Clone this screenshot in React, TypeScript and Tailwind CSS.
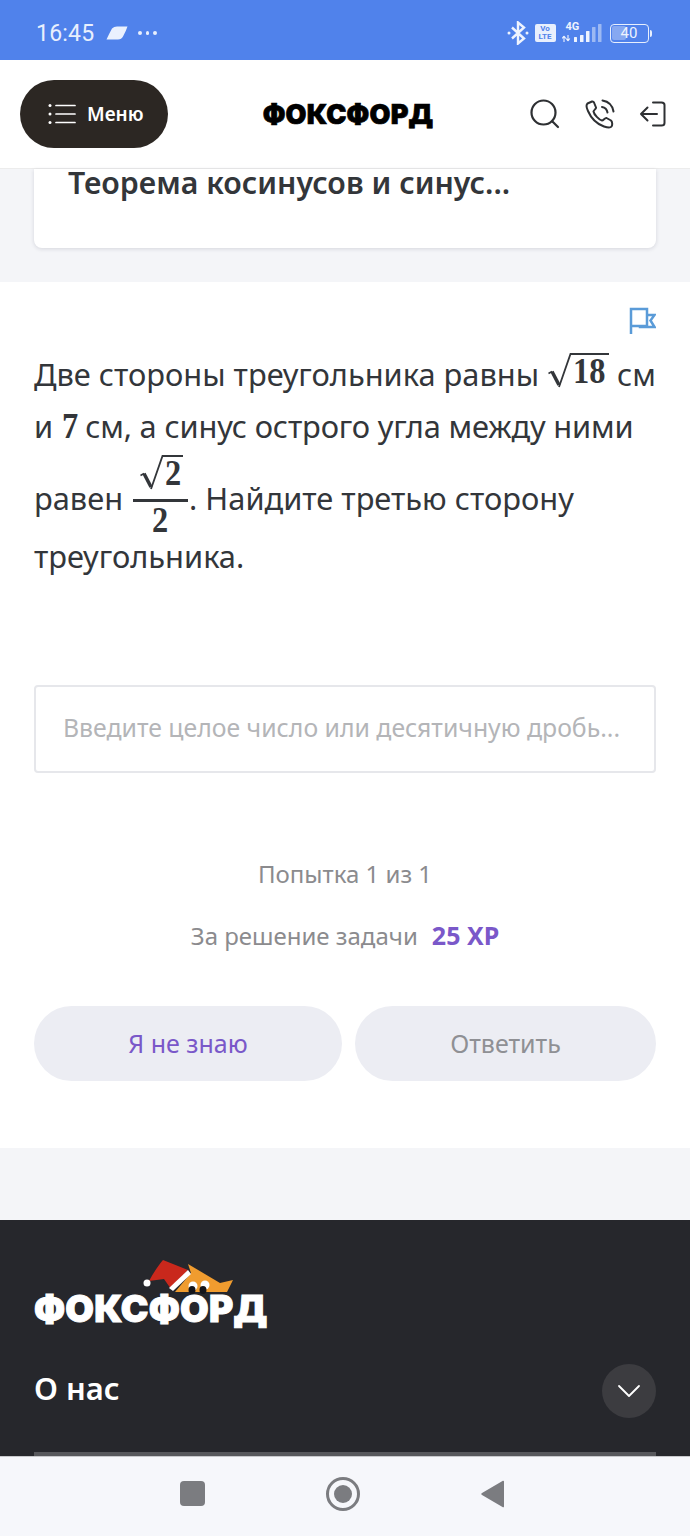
import React from "react";

const sans = "font-['Noto_Sans',sans-serif]";
const mathCls = "font-['Liberation_Serif',serif] font-bold text-[#33363a]";

function Digits({ n, className = "" }: { n: string; className?: string }) {
  return <span className={`inline-block scale-x-[0.9] origin-left text-[36px] ${mathCls} ${className}`}>{n}</span>;
}

function Root({ n, barW }: { n: string; barW: number }) {
  return (
    <span className="inline-flex items-start">
      <svg width="26" height="36" viewBox="0 0 26 36" className="shrink-0">
        <path d="M1.500 20.500L5 18.500" fill="none" stroke="#33363a" strokeWidth="1.500" />
        <path d="M5 18.500L12 32" fill="none" stroke="#33363a" strokeWidth="3.500" />
        <path d="M12 34L23.500 1H26" fill="none" stroke="#33363a" strokeWidth="1.800" />
      </svg>
      <span className="border-t-2 border-[#33363a] leading-[33px] overflow-visible" style={{ width: barW }}>
        <Digits n={n} />
      </span>
    </span>
  );
}

function Logo({ className }: { className: string }) {
  return <span className={`font-['Inter',sans-serif] font-black tracking-[0.2px] whitespace-nowrap ${className}`}>ФОКСФОРД</span>;
}

export default function App() {
  return (
    <div className={`w-[690px] h-[1536px] overflow-hidden flex flex-col bg-white ${sans}`}>
      {/* Status bar */}
      <div className="h-[60px] shrink-0 bg-[#5082eb] flex items-center pt-[6px] pl-[36px] pr-[38px] text-[#e8effd]">
        <span className="text-[23px] leading-none font-['Roboto',sans-serif] tracking-[0.2px]">16:45</span>
        <svg width="22" height="14" viewBox="0 0 22 14" className="ml-[12px]">
          <path d="M6 2.500Q8 0.500 11 0.500H21.500Q20 5 17 10.500Q15.500 13.500 12 13.500H0.500Q3 8 6 2.500Z" fill="#eaf1fe" />
        </svg>
        <span className="ml-[10px] flex gap-[4px]">
          <i className="w-[3.500px] h-[3.500px] rounded-full bg-[#e8effd]" />
          <i className="w-[3.500px] h-[3.500px] rounded-full bg-[#e8effd]" />
          <i className="w-[3.500px] h-[3.500px] rounded-full bg-[#e8effd]" />
        </span>
        <span className="ml-auto flex items-center">
          <svg width="22" height="24" viewBox="0 0 22 24" fill="none" stroke="#eef3fe" strokeWidth="2.400">
            <path d="M5 6.500l12 11-6 5V1.500l6 5-12 11" />
            <circle cx="2" cy="12" r="1.500" fill="#eef3fe" stroke="none" />
            <circle cx="20" cy="12" r="1.500" fill="#eef3fe" stroke="none" />
          </svg>
          <span className="ml-[6px] w-[21px] h-[18px] rounded-[2px] bg-[#e8effd] text-[#5082eb] flex flex-col items-center justify-center text-[8px] leading-[8px] font-bold font-['Roboto',sans-serif]">
            <span>Vo</span>
            <span>LTE</span>
          </span>
          <span className="ml-[6px] relative w-[40px] h-[20px]">
            <span className="absolute left-[4px] -top-[1px] text-[#eef3fe] text-[11px] leading-[10px] font-bold font-['Roboto',sans-serif]">4G</span>
            <svg width="40" height="20" viewBox="0 0 40 20" className="absolute left-0 top-0">
              <path d="M2 19v-6M2 13l-1.800 2.500M2 13l1.800 2.500M6 12v6M6 18l-1.800-2.500M6 18l1.800-2.500" stroke="#eef3fe" strokeWidth="1.100" fill="none" />
              <rect x="12" y="14" width="3" height="5" rx="0.500" fill="#eef3fe" />
              <rect x="18" y="12" width="3.500" height="7" rx="0.500" fill="#eef3fe" />
              <rect x="24" y="8" width="3.500" height="11" rx="0.500" fill="#eef3fe" />
              <rect x="30" y="4" width="3.500" height="15" rx="0.500" fill="#9db9f3" />
              <rect x="36" y="1" width="3.500" height="18" rx="0.500" fill="#9db9f3" />
            </svg>
          </span>
          <span className="ml-[8px] relative w-[39px] h-[19px] rounded-[4px] border-[1.500px] border-[#e8effd] flex items-center justify-center overflow-hidden">
            <span className="absolute left-[1.500px] top-[1.500px] bottom-[1.500px] w-[14px] rounded-[2px] bg-[#86a8f1]" />
            <span className="relative text-[15px] leading-none text-[#eef3fe] font-['Roboto',sans-serif]">40</span>
          </span>
          <span className="ml-[1px] w-[2.500px] h-[7px] rounded-r-[2px] bg-[#e8effd]" />
        </span>
      </div>

      {/* Header */}
      <div className="h-[109px] shrink-0 bg-white border-b border-[#ececec] flex items-center pl-[20px] pr-[24px]">
        <div className="w-[148px] h-[68px] rounded-full bg-[#2c2723] flex items-center pl-[28px] text-white">
          <svg width="28" height="22" viewBox="0 0 28 22" fill="none" stroke="#fff" strokeWidth="1.700" strokeLinecap="round">
            <path d="M8 2.500H27M8 11H27M8 19.500H27" />
            <circle cx="2" cy="2.500" r="1.500" fill="#fff" stroke="none" />
            <circle cx="2" cy="11" r="1.500" fill="#fff" stroke="none" />
            <circle cx="2" cy="19.500" r="1.500" fill="#fff" stroke="none" />
          </svg>
          <span className="ml-[11px] text-[19px] leading-none font-semibold">Меню</span>
        </div>
        <div className="ml-[95px] w-[170px] flex justify-center">
          <Logo className="text-[27px] leading-none text-black [-webkit-text-stroke:0.7px_black]" />
        </div>
        <div className="ml-auto flex items-center gap-[25px]">
          <svg width="30" height="30" viewBox="0 0 30 30" fill="none" stroke="#2e3033" strokeWidth="2.200" strokeLinecap="round">
            <circle cx="13.500" cy="13.500" r="12" />
            <path d="M22.500 22.500L28 28" />
          </svg>
          <svg width="30" height="30" viewBox="0 0 30 30" fill="none" stroke="#2e3033" strokeWidth="2" strokeLinecap="round" strokeLinejoin="round">
            <path d="M7 2.500L2.500 4.500C1 6 1.500 9 3 12C6 19 12 25 19 27.500C22 28.500 25.500 29 26.500 27.500C27.500 26 27.500 23 26 21.500L21.500 19C20 18.500 18.500 21.500 17 21.500C14 21 9 15.500 8.500 12.500C8.500 11 11.500 10 11 8.500L9 3.500C8.500 2.500 7.800 2.300 7 2.500Z" />
            <path d="M17 8C20 8.500 22 10.500 22.500 13.500M17.500 1.500C23.500 2.500 27.500 6.500 28.500 12.500" />
          </svg>
          <svg width="27" height="26" viewBox="0 0 27 26" fill="none" stroke="#2e3033" strokeWidth="2" strokeLinecap="round" strokeLinejoin="round" className="ml-[-1px]">
            <path d="M14 1.500H22.500C24.500 1.500 25.500 2.500 25.500 4V22C25.500 23.500 24.500 24.500 22.500 24.500H14" />
            <path d="M18 13H2M8.500 6.500L2 13L8.500 19.500" />
          </svg>
        </div>
      </div>

      {/* Previous card area */}
      <div className="h-[113px] shrink-0 bg-[#f4f5f8] px-[34px]">
        <div className="h-[79px] bg-white rounded-b-[8px] shadow-[0_1px_4px_rgba(30,30,60,0.14)] pl-[34px]">
          <div className="text-[30.300px] leading-[28px] font-semibold text-[#33363a] whitespace-nowrap">Теорема косинусов и синус...</div>
        </div>
      </div>

      {/* Task */}
      <div className="h-[866px] shrink-0 bg-white px-[34px] flex flex-col">
        <div className="h-[66px] shrink-0 flex justify-end items-end pb-[14px] pr-[0.500px]">
          <svg width="27" height="27" viewBox="0 0 27 27" fill="none" stroke="#5a9bd8" strokeWidth="2.500">
            <path d="M2 27V2H18V19H2M18 8H25.500L21.500 13.500L25.500 20H11V19" />
          </svg>
        </div>
        <div className="text-[30.800px] text-[#33363a] whitespace-nowrap">
          <div className="h-[52px] flex items-center">
            <span>Две стороны треугольника равны</span>
            <span className="ml-[8px] mt-[6px]"><Root n="18" barW={36} /></span>
            <span className="ml-[8px]">см</span>
          </div>
          <div className="h-[52px] flex items-center">
            <span>и</span>
            <span className="ml-[9px] w-[18px]"><Digits n="7" /></span>
            <span className="ml-[5px] tracking-[-0.15px]">см, а синус острого угла между ними</span>
          </div>
          <div className="h-[92px] flex items-center">
            <span>равен</span>
            <span className="ml-[10px] w-[55px] flex flex-col items-center -mt-[4px]">
              <span className="h-[44px] flex items-end pb-[8px]"><Root n="2" barW={18} /></span>
              <span className="w-full border-t-[3px] border-[#33363a]" />
              <span className="h-[36px] leading-[36px] w-[17px]"><Digits n="2" /></span>
            </span>
            <span className="ml-[1px]">. Найдите третью сторону</span>
          </div>
          <div className="h-[24px] flex items-center">треугольника.</div>
        </div>
        <div className="mt-[117px] h-[88px] shrink-0 rounded-[4px] border-2 border-[#e6e7eb] flex items-center pl-[28px] text-[24.800px] text-[#b4b5b8] whitespace-nowrap">
          <span className="-mt-[3px] -ml-[1px]">Введите целое число или десятичную дробь...</span>
        </div>
        <div className="mt-[83px] h-[36px] shrink-0 flex items-center justify-center text-[24px] text-[#8b8b8e]">Попытка 1 из 1</div>
        <div className="mt-[26px] h-[36px] shrink-0 flex items-center justify-center text-[24px] text-[#8b8b8e] gap-[14px]">
          <span>За решение задачи</span>
          <span className="font-bold text-[25px] text-[#7a58c9]">25 XP</span>
        </div>
        <div className="mt-[52px] shrink-0 flex gap-[13px]">
          <div className="w-[308px] h-[75px] rounded-full bg-[#ecedf3] flex items-center justify-center text-[25px] text-[#7a58c9]">Я не знаю</div>
          <div className="flex-1 h-[75px] rounded-full bg-[#ecedf3] flex items-center justify-center text-[25px] text-[#8f9094]">Ответить</div>
        </div>
      </div>

      {/* Gap */}
      <div className="h-[72px] shrink-0 bg-[#f4f5f8]" />

      {/* Footer */}
      <div className="h-[236px] shrink-0 bg-[#26272c] px-[34px] flex flex-col overflow-hidden">
        <div className="relative h-[110px] shrink-0">
          <svg width="94" height="36" viewBox="0 0 94 36" className="absolute left-[108px] top-[38px]">
            <path d="M46 6L78 25L91 22L85 34H33L49 15Z" fill="#f09c2f" />
            <path d="M7 23C12 14 16 8 21 2L46 12L29 31L22 21Z" fill="#c9281c" />
            <path d="M27 30L46 12L49 16L31 33Z" fill="#fff" />
            <circle cx="5" cy="25" r="3.500" fill="#fff" />
            <circle cx="51" cy="28" r="4.500" fill="#fff" />
            <circle cx="63" cy="27" r="4.500" fill="#fff" />
            <ellipse cx="50" cy="32" rx="3.500" ry="4" fill="#15151a" />
            <ellipse cx="61" cy="32" rx="3.500" ry="4" fill="#15151a" />
          </svg>
          <Logo className="absolute left-0 top-[70px] text-[37px] leading-none text-white [-webkit-text-stroke:1px_white]" />
        </div>
        <div className="h-[54px] shrink-0 mt-[34px] flex items-center justify-between">
          <span className="text-[31px] leading-none font-semibold text-white -mt-[6px]">О нас</span>
          <span className="w-[54px] h-[54px] rounded-full bg-[#3c3c40] flex items-center justify-center">
            <svg width="24" height="14" viewBox="0 0 24 14" fill="none" stroke="#fff" strokeWidth="1.800" strokeLinecap="round" strokeLinejoin="round">
              <path d="M2 2L12 12L22 2" />
            </svg>
          </span>
        </div>
        <div className="mt-auto h-[4px] shrink-0 bg-[#57585c]" />
      </div>

      {/* Nav bar */}
      <div className="h-[80px] shrink-0 bg-[#f6f7fb] border-t border-[#c8c9cc] flex items-center pl-[180px]">
        <span className="w-[25px] h-[25px] rounded-[4px] bg-[#7b7c80] -mt-[6px]" />
        <span className="ml-[121px] -mt-[6px] w-[34px] h-[34px] rounded-full border-[3px] border-[#7b7c80] flex items-center justify-center">
          <span className="w-[18px] h-[18px] rounded-full bg-[#7b7c80]" />
        </span>
        <svg width="24" height="28" viewBox="0 0 24 28" className="ml-[121px] -mt-[6px]">
          <path d="M23 1.500V26.500C23 27.500 22 27.500 21.500 27L1 15C0 14.300 0 13.700 1 13L21.500 1C22 0.500 23 0.500 23 1.500Z" fill="#7b7c80" />
        </svg>
      </div>
    </div>
  );
}
